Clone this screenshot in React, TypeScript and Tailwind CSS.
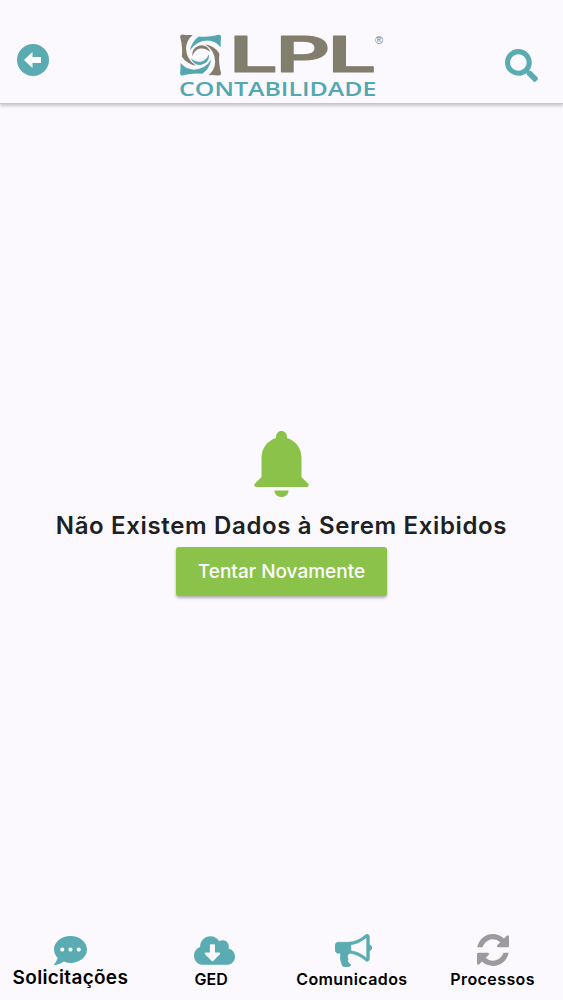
import { FaCloudDownloadAlt, FaCommentDots, FaSearch } from "react-icons/fa";

const BLADE = "M20 27Q20 19 29 20Q42 22 56 21Q38 36 37 60Q38 92 66 110Q38 104 25 84Q28 55 20 27Z";
const INNER_BLADE = "M55 82Q52 57 77 51Q99 48 107 70Q94 58 78 60Q62 63 55 82Z";

function Logo() {
  return (
    <svg width="208" height="68" viewBox="178 32 208 68" overflow="visible" role="img" aria-label="LPL Contabilidade">
      <g transform="translate(173.200 27.700) scale(0.347)">
        <path fill="#827d6c" d={BLADE} />
        <path fill="#52a7b1" d={BLADE} transform="rotate(90 79 79)" />
        <path fill="#827d6c" d={BLADE} transform="rotate(180 79 79)" />
        <path fill="#52a7b1" d={BLADE} transform="rotate(270 79 79)" />
        <path fill="#827d6c" d={INNER_BLADE} />
        <path fill="#52a7b1" d={INNER_BLADE} transform="rotate(180 79 79)" />
      </g>
      <g fill="#827d6c" stroke="#827d6c" strokeWidth="1" strokeLinejoin="round" fontFamily="Inter, sans-serif" fontWeight="600" fontSize="49">
        <text x="229" y="71.500" textLength="49" lengthAdjust="spacingAndGlyphs">L</text>
        <text x="275.500" y="71.500" textLength="55" lengthAdjust="spacingAndGlyphs">P</text>
        <text x="327.500" y="71.500" textLength="49" lengthAdjust="spacingAndGlyphs">L</text>
      </g>
      <text x="375" y="44" fill="#827d6c" fontFamily="Liberation Sans, sans-serif" fontSize="11">®</text>
      <text x="179" y="95.500" fill="#52a7b1" fontFamily="Open Sans, sans-serif" fontWeight="600" fontSize="19.500" textLength="197.500" lengthAdjust="spacingAndGlyphs">CONTABILIDADE</text>
    </svg>
  );
}

function BullhornIcon() {
  return (
    <svg width="37" height="33" viewBox="0 128 1792 1536" preserveAspectRatio="none" fill="#5aacb2" stroke="#5aacb2" strokeWidth="30" aria-hidden="true" className="ml-[3px]">
      <path d="M1664 640q53 0 90.500 37.500t37.500 90.500-37.500 90.500-90.500 37.500v384q0 52-38 90t-90 38q-417-347-812-380-58 19-91 66t-31 100.500 40 92.500q-20 33-23 65.500t6 58 33.500 55 48 50 61.500 50.500q-29 58-111.500 83t-168.500 11.500-132-55.500q-7-23-29.500-87.500t-32-94.500-23-89-15-101 3.500-98.500 22-110.500h-122q-66 0-113-47t-47-113v-192q0-66 47-113t113-47h480q435 0 896-384 52 0 90 38t38 90v384zm-128 604v-954q-394 302-768 343v270q377 42 768 341z" />
    </svg>
  );
}

function RefreshIcon() {
  return (
    <svg width="32" height="32" viewBox="0 128 1536 1536" fill="#9b9a9d" aria-hidden="true">
      <path d="M1511 1056q0 5-1 7-64 268-268 434.500t-478 166.500q-146 0-282.500-55t-243.500-157l-129 129q-19 19-45 19t-45-19-19-45v-448q0-26 19-45t45-19h448q26 0 45 19t19 45-19 45l-137 137q71 66 161 102t187 36q134 0 250-65t186-179q11-17 53-117 8-23 30-23h192q13 0 22.500 9.500t9.500 22.500zm25-800v448q0 26-19 45t-45 19h-448q-26 0-45-19t-19-45 19-45l138-138q-148-137-349-137-134 0-250 65t-186 179q-11 17-53 117-8 23-30 23h-199q-13 0-22.500-9.500t-9.500-22.500v-7q65-268 270-434.500t480-166.500q146 0 284 55.500t245 156.500l130-129q19-19 45-19t45 19 19 45z" />
    </svg>
  );
}

export default function App() {
  return (
    <div className="flex h-[1000px] w-[563px] flex-col overflow-hidden bg-[#fbf9fd] font-['Inter',sans-serif]">
      <header className="flex h-[104px] shrink-0 items-start border-b border-[#c9c8ca] pr-[25px] pl-[17px] shadow-[0_2px_3px_rgba(0,0,0,0.2)]">
        <button aria-label="Voltar" className="mt-11 w-[161px]">
          <svg width="32" height="32" viewBox="0 0 32 32">
            <circle cx="16" cy="16" r="16" fill="#5aacb2" />
            <path d="M7 16L15.500 8V13H24V19H15.500V24Z" fill="#fff" />
          </svg>
        </button>
        <div className="mt-8"><Logo /></div>
        <button aria-label="Buscar" className="mt-[49px] ml-auto">
          <FaSearch size={33} color="#5aacb2" />
        </button>
      </header>
      <main className="flex flex-1 flex-col items-center pt-[327px]">
        <svg width="56" height="66" viewBox="0.5 0 56 66" fill="#8bc34a" aria-hidden="true">
          <path d="M22.500 6C22.500 2.500 25 0 28 0S33.500 2.500 33.500 6V7C43 10 48 18 48 27V46L55 53Q56 56 53 56H3Q0 56 1 53L8 46V27C8 18 13 10 22.500 7Z" />
          <path d="M21 59.500H35C35 63.500 32 66 28 66S21 63.500 21 59.500Z" />
        </svg>
        <h1 className="mt-[13px] text-[24px] leading-8 font-semibold tracking-[0.65px] whitespace-nowrap text-[#201f23]">
          Não Existem Dados à Serem Exibidos
        </h1>
        <button className="mt-[5px] h-[49px] w-[211px] rounded-[3px] bg-[#8bc34a] pt-[2px] text-[19px] font-medium text-white shadow-[0_2px_3px_rgba(0,0,0,0.3)]">
          Tentar Novamente
        </button>
      </main>
      <nav className="grid h-[68px] shrink-0 grid-cols-4 text-center font-semibold whitespace-nowrap text-black">
        <a className="flex flex-col items-center pt-[2px] text-[19px]">
          <FaCommentDots size={33} color="#5aacb2" />
          <span className="mt-[-1px] leading-6 tracking-[0.3px]">Solicitações</span>
        </a>
        <a className="flex flex-col items-center text-[16px]">
          <FaCloudDownloadAlt size={41} color="#5aacb2" className="mt-[-2px] ml-[7px]" />
          <span className="mt-[-2px] leading-5">GED</span>
        </a>
        <a className="flex flex-col items-center pt-[2px] text-[16px]">
          <BullhornIcon />
          <span className="mt-[2px] leading-5 tracking-[0.4px]">Comunicados</span>
        </a>
        <a className="flex flex-col items-center pt-[2px] text-[16px]">
          <RefreshIcon />
          <span className="mt-[3px] leading-5 tracking-[0.4px]">Processos</span>
        </a>
      </nav>
    </div>
  );
}
